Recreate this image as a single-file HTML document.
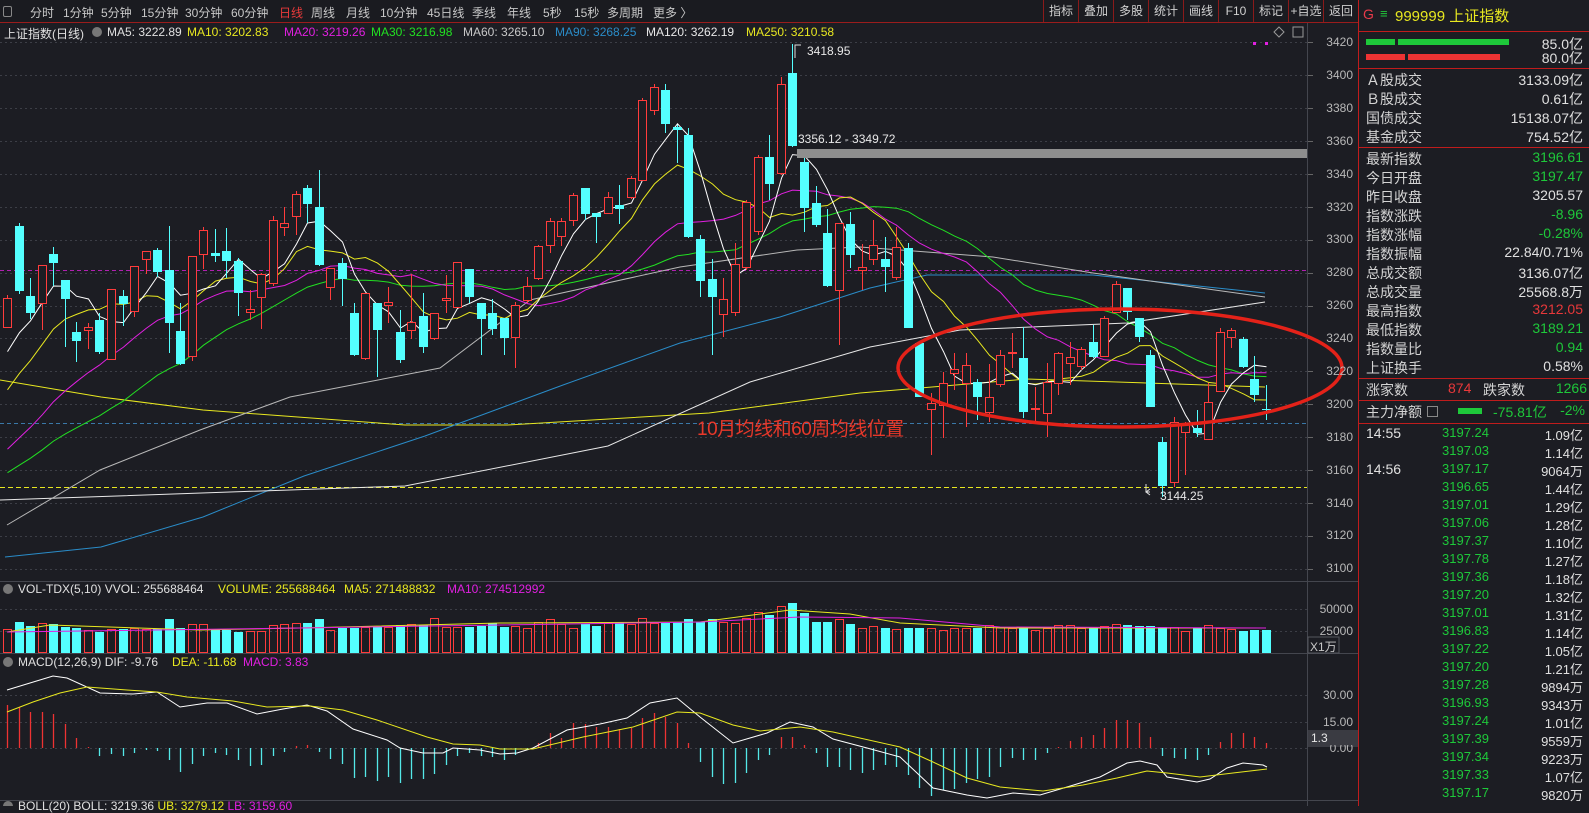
<!DOCTYPE html>
<html><head><meta charset="utf-8">
<style>
*{margin:0;padding:0;box-sizing:border-box}
body{width:1589px;height:806px;background:#1c1d23;overflow:hidden;position:relative;font-family:"Liberation Sans","Noto Sans CJK SC",sans-serif;color:#d0d0d0}
.a{position:absolute;white-space:nowrap}
.tb{position:absolute;left:0;top:0;width:1358px;height:23px;background:#1a1b20;border-bottom:1px solid #9a1c1c}
.tb span{position:absolute;top:4px;font-size:12px;color:#c8c8c8}
.bt{position:absolute;top:0;height:22px;border-left:1px solid #8a1a1a;font-size:12px;color:#d0d0d0;text-align:center;line-height:22px}
.hd{position:absolute;font-size:12px;top:25px}
.ax{position:absolute;font-size:12px;color:#b8b8b8;text-align:right;width:45px;left:1308px}
.rp{position:absolute;left:1358px;top:0;width:231px;height:806px;border-left:1px solid #c01c1c;background:#1c1d23}
.rl{position:absolute;left:1366px;font-size:14px;color:#d4d4d4}
.rv{position:absolute;right:6px;font-size:14px;text-align:right;color:#e0e0e0}
.g{color:#1ec83a}.r{color:#e8383a}
.hl{position:absolute;left:1358px;width:231px;height:1px;background:#c01c1c}
.tr{position:absolute;font-size:13px}
</style></head><body>
<svg id="sv" class="a" style="left:0;top:0" width="1589" height="806" xmlns="http://www.w3.org/2000/svg">
<g id="grid"></g>
<g id="main"></g>
<line x1="1307.5" y1="23" x2="1307.5" y2="806" stroke="#44464e"/>
<line x1="0" y1="581.5" x2="1358" y2="581.5" stroke="#44464e"/>
<line x1="0" y1="653.5" x2="1358" y2="653.5" stroke="#44464e"/>
<line x1="0" y1="800.5" x2="1358" y2="800.5" stroke="#44464e"/>
<rect x="797" y="149" width="510" height="9" fill="#8e8e8e"/>
<ellipse cx="1120" cy="368" rx="222" ry="59" fill="none" stroke="#e42219" stroke-width="3.5"/>
<rect x="1308" y="637" width="31" height="16" fill="none" stroke="#55575e"/>
<rect x="1308" y="730" width="50" height="17" fill="#3a3b42"/>
<circle cx="8" cy="589" r="5" fill="#777"/>
<circle cx="8" cy="662" r="5" fill="#777"/>
<circle cx="8" cy="806" r="5" fill="#777"/>
<circle cx="97" cy="32" r="5" fill="#777"/>
<rect x="1253" y="42" width="3" height="3" fill="#e020e0"/><rect x="1265" y="42" width="3" height="3" fill="#e020e0"/>
<path d="M1279 27 l5 5 -5 5 -5 -5z" fill="none" stroke="#999"/>
<rect x="1293" y="27" width="10" height="10" fill="none" stroke="#999"/>
<path d="M795 58 V45 h6" fill="none" stroke="#ddd"/>
<path d="M1146 484 V492 h4 M1150 489 l-4 3 4 3" fill="none" stroke="#ddd"/>
</svg>

<div class="tb">
<span style="left:3px;top:6px;width:9px;height:11px;border:1px solid #888;border-radius:2px"></span>
<span style="left:30px">分时</span><span style="left:63px">1分钟</span><span style="left:101px">5分钟</span><span style="left:141px">15分钟</span><span style="left:185px">30分钟</span><span style="left:231px">60分钟</span><span style="left:279px;color:#e83a3a">日线</span><span style="left:311px">周线</span><span style="left:346px">月线</span><span style="left:380px">10分钟</span><span style="left:427px">45日线</span><span style="left:472px">季线</span><span style="left:507px">年线</span><span style="left:543px">5秒</span><span style="left:574px">15秒</span><span style="left:607px">多周期</span><span style="left:653px">更多 〉</span>
<div class="bt" style="left:1043px;width:35px">指标</div><div class="bt" style="left:1078px;width:35px">叠加</div><div class="bt" style="left:1113px;width:35px">多股</div><div class="bt" style="left:1148px;width:35px">统计</div><div class="bt" style="left:1183px;width:35px">画线</div><div class="bt" style="left:1218px;width:35px">F10</div><div class="bt" style="left:1253px;width:35px">标记</div><div class="bt" style="left:1288px;width:35px">+自选</div><div class="bt" style="left:1323px;width:35px">返回</div>
</div>

<div class="hd" style="left:4px;color:#e0e0e0">上证指数(日线)</div>
<div class="hd" style="left:107px;color:#e0e0e0">MA5: 3222.89</div>
<div class="hd" style="left:187px;color:#e8e820">MA10: 3202.83</div>
<div class="hd" style="left:284px;color:#e020e0">MA20: 3219.26</div>
<div class="hd" style="left:371px;color:#22e022">MA30: 3216.98</div>
<div class="hd" style="left:463px;color:#c8c8c8">MA60: 3265.10</div>
<div class="hd" style="left:555px;color:#2a8cc8">MA90: 3268.25</div>
<div class="hd" style="left:646px;color:#e8e8e8">MA120: 3262.19</div>
<div class="hd" style="left:746px;color:#e8e820">MA250: 3210.58</div>

<div class="a" style="left:807px;top:44px;font-size:12px;color:#e8e8e8">3418.95</div>
<div class="a" style="left:798px;top:132px;font-size:12px;color:#e8e8e8">3356.12 - 3349.72</div>
<div class="a" style="left:1160px;top:489px;font-size:12px;color:#e8e8e8">3144.25</div>
<div class="a" style="left:697px;top:414px;font-size:19px;color:#e8382a;letter-spacing:-0.5px">10月均线和60周均线位置</div>

<div class="a" style="left:18px;top:582px;font-size:12px;color:#e0e0e0">VOL-TDX(5,10) VVOL: 255688464</div>
<div class="a" style="left:218px;top:582px;font-size:12px;color:#e8e820">VOLUME: 255688464</div>
<div class="a" style="left:344px;top:582px;font-size:12px;color:#e8e820">MA5: 271488832</div>
<div class="a" style="left:447px;top:582px;font-size:12px;color:#e020e0">MA10: 274512992</div>
<div class="a" style="left:18px;top:655px;font-size:12px;color:#e0e0e0">MACD(12,26,9) DIF: -9.76</div>
<div class="a" style="left:172px;top:655px;font-size:12px;color:#e8e820">DEA: -11.68</div>
<div class="a" style="left:243px;top:655px;font-size:12px;color:#e020e0">MACD: 3.83</div>
<div class="a" style="left:18px;top:799px;font-size:12px;color:#e0e0e0">BOLL(20) BOLL: 3219.36 <span style="color:#e8e820">UB: 3279.12</span> <span style="color:#e020e0">LB: 3159.60</span></div>

<div class="ax" style="top:35px">3420</div><div class="ax" style="top:68px">3400</div><div class="ax" style="top:101px">3380</div><div class="ax" style="top:134px">3360</div><div class="ax" style="top:167px">3340</div><div class="ax" style="top:200px">3320</div><div class="ax" style="top:232px">3300</div><div class="ax" style="top:265px">3280</div><div class="ax" style="top:298px">3260</div><div class="ax" style="top:331px">3240</div><div class="ax" style="top:364px">3220</div><div class="ax" style="top:397px">3200</div><div class="ax" style="top:430px">3180</div><div class="ax" style="top:463px">3160</div><div class="ax" style="top:496px">3140</div><div class="ax" style="top:528px">3120</div><div class="ax" style="top:561px">3100</div>
<div class="ax" style="top:602px">50000</div><div class="ax" style="top:624px">25000</div>
<div class="a" style="left:1310px;top:638px;font-size:12px;color:#c8c8c8">X1万</div>
<div class="ax" style="top:688px">30.00</div><div class="ax" style="top:715px">15.00</div><div class="ax" style="top:741px">0.00</div>
<div class="a" style="left:1311px;top:731px;font-size:12px;color:#e8e8e8;background:#3a3b42;width:46px">1.3</div>

<div class="rp"></div>
<div class="a" style="left:1363px;top:6px;font-size:14px;color:#e83a4a">G</div>
<div class="a" style="left:1380px;top:6px;font-size:13px;color:#22c83a">≡</div>
<div class="a" style="left:1395px;top:5px;font-size:15px;color:#e8e820">999999 上证指数</div>
<div class="hl" style="top:31px"></div>
<div class="a" style="left:1366px;top:39px;width:29px;height:6px;background:#1ec83a"></div>
<div class="a" style="left:1398px;top:39px;width:111px;height:6px;background:#1ec83a"></div>
<div class="a" style="left:1366px;top:54px;width:39px;height:6px;background:#ee3333"></div>
<div class="a" style="left:1408px;top:54px;width:92px;height:6px;background:#ee3333"></div>
<div class="rv" style="top:34px">85.0亿</div><div class="rv" style="top:48px">80.0亿</div>
<div class="hl" style="top:68px"></div>
<div class="rl" style="top:70px">Ａ股成交</div><div class="rv" style="top:70px">3133.09亿</div>
<div class="rl" style="top:89px">Ｂ股成交</div><div class="rv" style="top:89px">0.61亿</div>
<div class="rl" style="top:108px">国债成交</div><div class="rv" style="top:108px">15138.07亿</div>
<div class="rl" style="top:127px">基金成交</div><div class="rv" style="top:127px">754.52亿</div>
<div class="hl" style="top:147px"></div>
<div class="rl" style="top:149px">最新指数</div><div class="rv g" style="top:149px">3196.61</div>
<div class="rl" style="top:168px">今日开盘</div><div class="rv g" style="top:168px">3197.47</div>
<div class="rl" style="top:187px">昨日收盘</div><div class="rv" style="top:187px">3205.57</div>
<div class="rl" style="top:206px">指数涨跌</div><div class="rv g" style="top:206px">-8.96</div>
<div class="rl" style="top:225px">指数涨幅</div><div class="rv g" style="top:225px">-0.28%</div>
<div class="rl" style="top:244px">指数振幅</div><div class="rv" style="top:244px">22.84/0.71%</div>
<div class="rl" style="top:263px">总成交额</div><div class="rv" style="top:263px">3136.07亿</div>
<div class="rl" style="top:282px">总成交量</div><div class="rv" style="top:282px">25568.8万</div>
<div class="rl" style="top:301px">最高指数</div><div class="rv r" style="top:301px">3212.05</div>
<div class="rl" style="top:320px">最低指数</div><div class="rv g" style="top:320px">3189.21</div>
<div class="rl" style="top:339px">指数量比</div><div class="rv g" style="top:339px">0.94</div>
<div class="rl" style="top:358px">上证换手</div><div class="rv" style="top:358px">0.58%</div>
<div class="hl" style="top:378px"></div>
<div class="rl" style="top:380px">涨家数</div><div class="a r" style="left:1448px;top:380px;font-size:14px">874</div>
<div class="a" style="left:1483px;top:380px;font-size:14px;color:#d4d4d4">跌家数</div><div class="rv g" style="top:380px;right:2px">1266</div>
<div class="hl" style="top:400px"></div>
<div class="rl" style="top:402px">主力净额</div>
<div class="a" style="left:1427px;top:406px;width:11px;height:11px;border:1px solid #888"></div>
<div class="a" style="left:1458px;top:408px;width:24px;height:6px;background:#1ec83a"></div>
<div class="a g" style="left:1493px;top:402px;font-size:14px">-75.81亿</div>
<div class="rv g" style="top:402px;right:4px">-2%</div>
<div class="hl" style="top:423px"></div>
<div id="ticks"></div>
<div class="tr" style="left:1366px;top:425px;color:#e0e0e0;font-size:14px">14:55</div>
<div class="tr" style="left:1366px;top:461px;color:#e0e0e0;font-size:14px">14:56</div>
<div class="tr g" style="left:1442px;top:425px">3197.24</div><div class="rv" style="top:425px;font-size:13px">1.09亿</div>
<div class="tr g" style="left:1442px;top:443px">3197.03</div><div class="rv" style="top:443px;font-size:13px">1.14亿</div>
<div class="tr g" style="left:1442px;top:461px">3197.17</div><div class="rv" style="top:461px;font-size:13px">9064万</div>
<div class="tr g" style="left:1442px;top:479px">3196.65</div><div class="rv" style="top:479px;font-size:13px">1.44亿</div>
<div class="tr g" style="left:1442px;top:497px">3197.01</div><div class="rv" style="top:497px;font-size:13px">1.29亿</div>
<div class="tr g" style="left:1442px;top:515px">3197.06</div><div class="rv" style="top:515px;font-size:13px">1.28亿</div>
<div class="tr g" style="left:1442px;top:533px">3197.37</div><div class="rv" style="top:533px;font-size:13px">1.10亿</div>
<div class="tr g" style="left:1442px;top:551px">3197.78</div><div class="rv" style="top:551px;font-size:13px">1.27亿</div>
<div class="tr g" style="left:1442px;top:569px">3197.36</div><div class="rv" style="top:569px;font-size:13px">1.18亿</div>
<div class="tr g" style="left:1442px;top:587px">3197.20</div><div class="rv" style="top:587px;font-size:13px">1.32亿</div>
<div class="tr g" style="left:1442px;top:605px">3197.01</div><div class="rv" style="top:605px;font-size:13px">1.31亿</div>
<div class="tr g" style="left:1442px;top:623px">3196.83</div><div class="rv" style="top:623px;font-size:13px">1.14亿</div>
<div class="tr g" style="left:1442px;top:641px">3197.22</div><div class="rv" style="top:641px;font-size:13px">1.05亿</div>
<div class="tr g" style="left:1442px;top:659px">3197.20</div><div class="rv" style="top:659px;font-size:13px">1.21亿</div>
<div class="tr g" style="left:1442px;top:677px">3197.28</div><div class="rv" style="top:677px;font-size:13px">9894万</div>
<div class="tr g" style="left:1442px;top:695px">3196.93</div><div class="rv" style="top:695px;font-size:13px">9343万</div>
<div class="tr g" style="left:1442px;top:713px">3197.24</div><div class="rv" style="top:713px;font-size:13px">1.01亿</div>
<div class="tr g" style="left:1442px;top:731px">3197.39</div><div class="rv" style="top:731px;font-size:13px">9559万</div>
<div class="tr g" style="left:1442px;top:749px">3197.34</div><div class="rv" style="top:749px;font-size:13px">9223万</div>
<div class="tr g" style="left:1442px;top:767px">3197.33</div><div class="rv" style="top:767px;font-size:13px">1.07亿</div>
<div class="tr g" style="left:1442px;top:785px">3197.17</div><div class="rv" style="top:785px;font-size:13px">9820万</div>

<script>
var D=[[1,298,327,295,327],[0,226,291,223,294],[0,296,313,278,319],[1,265,303,265,330],[0,254,263,247,286],[0,280,299,280,347],[0,332,341,322,362],[1,327,330,323,349],[0,320,352,313,354],[1,289,359,289,360],[0,296,304,290,326],[1,266,311,266,317],[1,251,259,251,274],[0,250,272,248,277],[0,270,323,226,353],[0,331,364,303,365],[1,256,356,256,361],[1,230,254,227,269],[0,253,256,229,262],[0,251,261,228,278],[0,261,293,258,316],[1,309,312,290,320],[1,274,297,273,329],[1,220,283,216,286],[1,223,227,207,236],[1,194,216,191,235],[0,188,204,185,223],[0,207,265,170,266],[1,268,287,268,300],[0,263,279,258,306],[0,313,355,303,356],[1,293,358,293,360],[0,303,330,303,377],[1,302,305,287,323],[0,332,360,310,363],[1,322,330,274,339],[0,316,347,293,353],[1,313,338,313,340],[1,298,300,275,313],[1,262,307,262,308],[0,269,297,269,303],[0,303,319,303,355],[0,313,329,299,335],[0,318,338,318,355],[1,305,337,302,368],[1,286,300,277,303],[1,246,278,245,280],[1,221,245,218,253],[1,221,236,218,246],[1,195,220,193,226],[0,188,214,188,220],[0,213,217,213,243],[1,197,213,192,214],[0,205,209,185,224],[1,178,197,176,199],[1,100,180,98,181],[1,87,110,84,115],[0,90,124,84,133],[0,127,130,125,163],[0,135,237,128,238],[0,239,281,235,297],[0,279,297,259,355],[1,299,314,278,337],[1,264,312,243,316],[1,202,267,200,270],[1,157,231,155,235],[0,157,184,135,200],[1,84,173,77,175],[0,73,146,44,147],[0,162,208,155,232],[0,203,225,186,227],[0,233,286,209,287],[1,223,290,223,345],[0,224,255,212,268],[1,267,270,244,290],[1,245,259,220,265],[0,259,267,237,292],[1,247,277,227,280],[0,248,328,243,328],[0,343,397,343,397],[1,403,409,393,455],[1,383,405,372,438],[1,369,373,353,390],[1,365,383,353,427],[0,382,397,379,420],[1,397,412,364,422],[1,355,384,350,387],[1,352,353,333,368],[0,358,412,327,418],[1,408,409,387,422],[1,382,413,363,437],[1,353,383,352,395],[1,357,363,342,385],[1,349,366,347,370],[0,342,357,325,358],[1,318,356,316,357],[1,284,312,281,313],[0,288,312,288,320],[0,318,337,318,342],[0,355,407,350,407],[0,442,486,437,497],[1,422,482,417,487],[1,423,432,422,475],[0,428,433,410,437],[1,402,439,383,440],[1,332,391,328,392],[1,330,337,328,348],[0,339,367,337,368],[0,379,395,356,402],[0,409,410,385,420]];
var V=[629,622,626,623,624,627,628,630,632,629,629,628,629,629,619,628,624,624,630,630,632,631,631,625,624,623,623,619,630,628,628,627,626,627,625,624,625,618,627,627,627,626,623,627,626,628,622,619,624,628,624,626,623,622,624,618,623,623,622,619,622,619,622,623,618,612,615,606,603,613,622,622,619,624,628,626,628,629,628,628,628,630,628,628,628,625,627,628,627,630,628,625,625,628,628,626,624,625,626,626,627,627,631,628,625,628,629,631,630,630];
var M=[705,707,712,712,714,724,738,747,756,754,756,753,750,751,760,772,764,756,753,755,760,766,765,756,752,746,745,752,759,764,778,777,781,777,783,779,779,774,765,756,753,756,757,760,755,750,743,733,738,723,724,727,727,729,728,718,713,717,723,743,762,777,784,783,773,760,755,737,737,745,753,767,767,770,773,770,765,767,775,788,796,790,789,783,779,777,767,758,760,760,753,747,741,737,735,728,720,720,723,737,756,758,759,760,755,742,733,733,737,743];
var CY='#54ffff',RD='#ff3c3c';
function X(i){return Math.round(7+11.55*i)+0.5}
function yp(p){return 42.3+(3420-p)*1.645}
var g='';
for(var p=3420;p>=3100;p-=20){var y=Math.round(yp(p))+0.5;g+='<line x1="0" y1="'+y+'" x2="1307" y2="'+y+'" stroke="#3c3e46" stroke-dasharray="2,3"/><line x1="1307" y1="'+y+'" x2="1313" y2="'+y+'" stroke="#666"/>';}
[609,631,695,722,748].forEach(function(y){g+='<line x1="0" y1="'+(y+.5)+'" x2="1307" y2="'+(y+.5)+'" stroke="#3c3e46" stroke-dasharray="2,3"/>';});
g+='<line x1="0" y1="270.5" x2="1307" y2="270.5" stroke="#b020b0" stroke-dasharray="4,3"/>';
g+='<line x1="0" y1="423.5" x2="1307" y2="423.5" stroke="#3a78a8" stroke-dasharray="4,3"/>';
g+='<line x1="0" y1="487.5" x2="1307" y2="487.5" stroke="#e8e820" stroke-dasharray="5,3"/>';
document.getElementById('grid').innerHTML=g;
function pl(pts,c,w){return '<polyline points="'+pts.map(function(q){return q[0]+','+q[1]}).join(' ')+'" fill="none" stroke="'+c+'" stroke-width="'+(w||1)+'"/>';}
var s='';
// long MAs
s+=pl([[0,380],[101,397],[203,410],[405,425],[507,425],[709,413],[860,393],[1027,379],[1265,387]],'#e8e820');
s+=pl([[5,557],[101,547],[203,517],[304,476],[425,436],[563,385],[680,343],[780,317],[870,288],[927,275],[1093,275],[1265,293]],'#2a8cc8');
s+=pl([[0,500],[405,486],[608,446],[750,382],[870,347],[960,330],[1127,323],[1265,302]],'#e8e8e8');
s+=pl([[7,525],[100,470],[200,430],[290,397],[440,368],[530,300],[680,267],[797,250],[860,247],[993,257],[1093,273],[1265,297]],'#b8b8b8');
// computed MAs
var C=D.map(function(d){return d[0]?d[1]:d[2]});
function pre(k){return Math.min(330+14*k,520)}
function ma(n,col){var pts=[];for(var i=0;i<C.length;i++){var sm=0;for(var j=i-n+1;j<=i;j++){sm+=j>=0?C[j]:pre(-j);}pts.push([X(i),(sm/n).toFixed(1)]);}return pl(pts,col);}
s+=ma(30,'#22e022')+ma(20,'#e020e0')+ma(10,'#e8e820')+ma(5,'#ffffff');
// candles
D.forEach(function(d,i){var x=X(i),c=d[0]?RD:CY,h=Math.max(d[2]-d[1],1);
s+='<line x1="'+x+'" y1="'+d[3]+'" x2="'+x+'" y2="'+d[4]+'" stroke="'+c+'"/>';
if(d[0])s+='<rect x="'+(x-4)+'" y="'+(d[1]+.5)+'" width="8" height="'+h+'" fill="#1c1d23" stroke="'+c+'"/>';
else s+='<rect x="'+(x-4.5)+'" y="'+d[1]+'" width="9" height="'+h+'" fill="'+c+'"/>';});
// volume
V.forEach(function(v,i){var x=X(i),c=D[i][0]?RD:CY;
if(D[i][0])s+='<rect x="'+(x-4)+'" y="'+(v+.5)+'" width="8" height="'+(652-v)+'" fill="none" stroke="'+c+'"/>';
else s+='<rect x="'+(x-4.5)+'" y="'+v+'" width="9" height="'+(653-v)+'" fill="'+c+'"/>';});
s+=pl([[7,632],[50,625],[200,630],[300,628],[500,623],[700,622],[790,610],[850,614],[900,623],[1000,628],[1266,628]],'#e8e820');
s+=pl([[7,632],[300,628],[700,622],[800,617],[900,618],[1000,627],[1266,628]],'#e020e0');
// macd
M.forEach(function(m,i){var x=X(i);s+='<line x1="'+x+'" y1="748" x2="'+x+'" y2="'+m+'" stroke="'+(m<748?'#ee3333':'#54e8e8')+'" stroke-width="1.3"/>';});
s+=pl([[7,690],[30,683],[53,676],[67,678],[100,693],[133,694],[157,692],[180,707],[207,703],[227,703],[257,714],[283,709],[307,705],[327,711],[353,729],[387,740],[400,748],[423,753],[443,753],[453,748],[480,750],[500,754],[517,753],[533,748],[567,730],[600,724],[627,718],[650,703],[677,698],[700,717],[733,743],[767,733],[790,722],[813,727],[833,739],[867,748],[900,757],[933,788],[967,795],[987,798],[1013,793],[1040,795],[1067,787],[1100,777],[1127,763],[1140,761],[1157,765],[1167,777],[1197,782],[1210,779],[1227,768],[1243,763],[1263,765],[1267,767]],'#ffffff');
s+=pl([[7,712],[33,702],[60,693],[87,687],[127,690],[157,692],[187,697],[233,701],[267,707],[310,706],[343,710],[377,720],[427,737],[453,744],[480,745],[500,749],[533,749],[583,737],[633,727],[677,712],[700,713],[733,725],[760,731],[800,727],[833,732],[900,747],[933,762],[967,778],[1000,787],[1043,791],[1083,785],[1117,778],[1147,771],[1167,773],[1200,777],[1233,773],[1267,769]],'#e8e820');
document.getElementById('main').innerHTML=s;
</script>
</body></html>
